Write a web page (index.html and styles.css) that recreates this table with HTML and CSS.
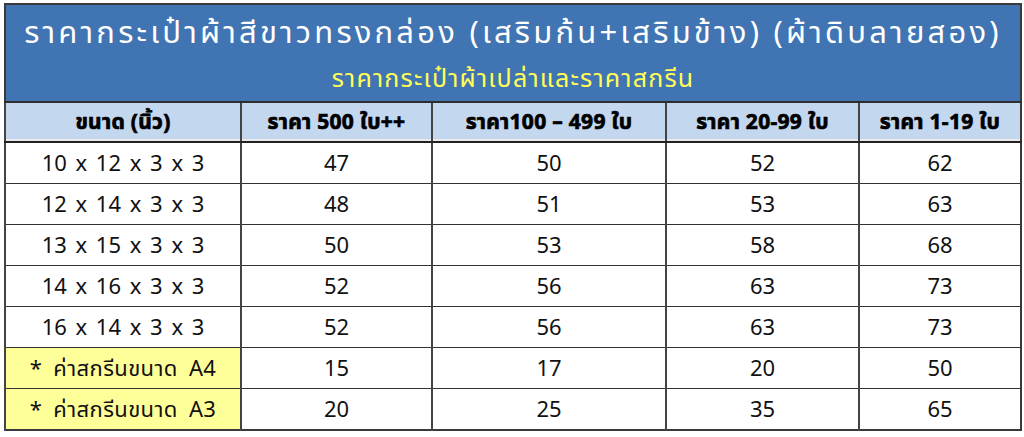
FILE: index.html
```html
<!DOCTYPE html>
<html lang="th">
<head>
<meta charset="utf-8">
<link rel="stylesheet" href="styles.css">
</head>
<body>
<div class="wrap">
<table class="price">
  <colgroup>
    <col class="c1"><col class="c2"><col class="c3"><col class="c4"><col class="c5">
  </colgroup>
  <thead>
    <tr class="banner">
      <th colspan="5">
        <div class="title">ราคากระเป๋าผ้าสีขาวทรงกล่อง (เสริมก้น+เสริมข้าง) (ผ้าดิบลายสอง)</div>
        <div class="subtitle">ราคากระเป๋าผ้าเปล่าและราคาสกรีน</div>
      </th>
    </tr>
    <tr class="heads">
      <th>ขนาด (นิ้ว)</th>
      <th>ราคา 500 ใบ++</th>
      <th>ราคา100 – 499 ใบ</th>
      <th>ราคา 20-99 ใบ</th>
      <th>ราคา 1-19 ใบ</th>
    </tr>
  </thead>
  <tbody>
    <tr><td class="dim">10 x 12 x 3 x 3</td><td>47</td><td>50</td><td>52</td><td>62</td></tr>
    <tr><td class="dim">12 x 14 x 3 x 3</td><td>48</td><td>51</td><td>53</td><td>63</td></tr>
    <tr><td class="dim">13 x 15 x 3 x 3</td><td>50</td><td>53</td><td>58</td><td>68</td></tr>
    <tr><td class="dim">14 x 16 x 3 x 3</td><td>52</td><td>56</td><td>63</td><td>73</td></tr>
    <tr><td class="dim">16 x 14 x 3 x 3</td><td>52</td><td>56</td><td>63</td><td>73</td></tr>
    <tr><td class="note">* ค่าสกรีนขนาด A4</td><td>15</td><td>17</td><td>20</td><td>50</td></tr>
    <tr><td class="note">* ค่าสกรีนขนาด A3</td><td>20</td><td>25</td><td>35</td><td>65</td></tr>
  </tbody>
</table>
</div>
</body>
</html>
```

FILE: styles.css
```css
html, body {
  margin: 0;
  padding: 0;
  background: #ffffff;
}
.wrap {
  padding: 3px 4px 3px 4px;
}
.price {
  width: 1016px;
  border-collapse: collapse;
  table-layout: fixed;
  font-family: "Noto Sans Thai", "Noto Sans", "DejaVu Sans", sans-serif;
  color: #111111;
  border: 2px solid #3a3a3a;
}
.c1 { width: 236px; }
.c2 { width: 191px; }
.c3 { width: 234px; }
.c4 { width: 193px; }
.c5 { width: 162px; }
.banner th {
  background: #4174b2;
  height: 96px;
  padding: 0;
  text-align: center;
  font-weight: normal;
  border-bottom: 2px solid #2d2d2d;
}
.title {
  color: #ffffff;
  font-size: 31px;
  letter-spacing: 3.2px;
  line-height: 40px;
  padding-top: 9px;
  white-space: nowrap;
}
.subtitle {
  color: #ffff55;
  font-size: 25px;
  letter-spacing: 1.2px;
  line-height: 30px;
  padding-top: 10px;
  padding-bottom: 7px;
}
.heads th {
  background: #c3d7ef;
  height: 38px;
  padding: 0;
  font-size: 21px;
  font-weight: 700;
  letter-spacing: 0.3px;
  color: #000000;
  -webkit-text-stroke: 0.7px #000000;
  border-left: 2px solid #444444;
  border-bottom: 2px solid #222222;
  box-shadow: inset 0 -2px 0 #e8e8e8;
}
td {
  height: 37px;
  padding: 3px 0 0 0;
  text-align: center;
  font-size: 22px;
  border-left: 2px solid #444444;
  border-top: 1.5px solid #333333;
}
.dim {
  word-spacing: 3px;
}
.note {
  background: #ffff99;
  word-spacing: 5px;
  letter-spacing: 0.4px;
}
```
